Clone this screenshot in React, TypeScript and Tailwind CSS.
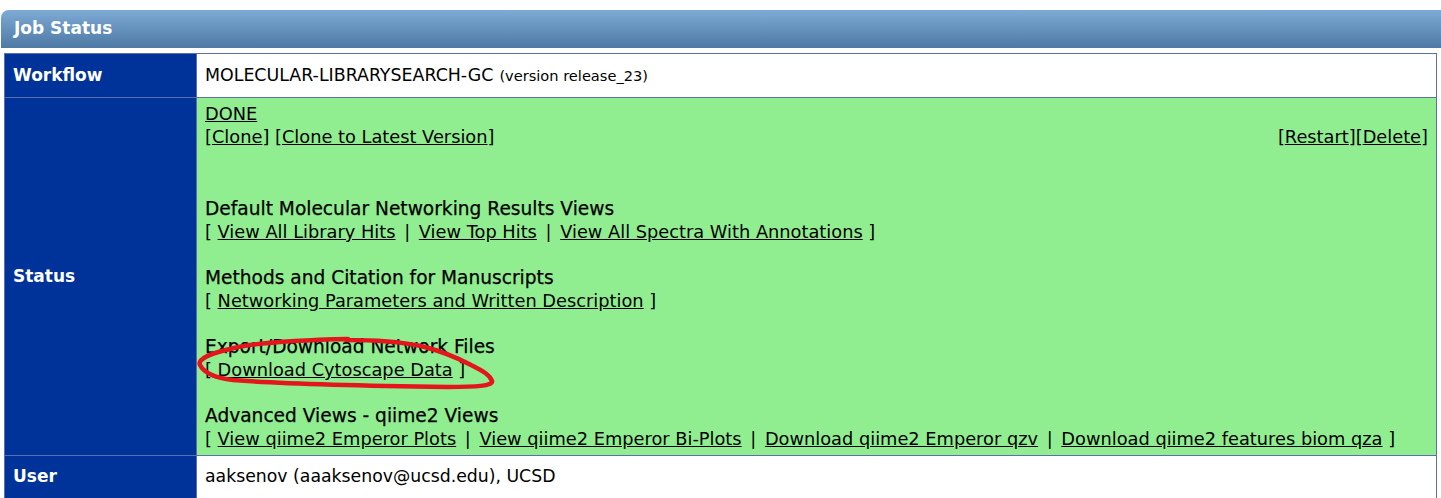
import React from "react";

const font = { fontFamily: '"DejaVu Sans", Verdana, sans-serif' };

function L({ children }: { children: React.ReactNode }) {
  return <a className="underline text-black cursor-pointer">{children}</a>;
}

function Sep() {
  return (
    <span>
      {" "}
      <span className="mx-[3px]">|</span>{" "}
    </span>
  );
}

function H({ children }: { children: React.ReactNode }) {
  return <div className="text-[18.6px] [-webkit-text-stroke:0.25px_black]">{children}</div>;
}

export default function App() {
  return (
    <div className="bg-white w-[1441px] h-[498px] overflow-hidden text-black" style={font}>
      <div className="pt-[10px]">
        <div className="ml-[1px] h-[38px] rounded-tl-[8px] bg-gradient-to-b from-[#7eaad6] to-[#4e79a5] flex items-center pl-[13px]">
          <span className="text-white font-bold text-[17px]">Job Status</span>
        </div>
      </div>
      <div className="mt-[5px] mx-[4px] border border-[#5b6eae] relative">
        <div className="flex border-b border-[#5b6eae] h-[44px]">
          <div className="w-[192px] bg-[#003399] text-white font-bold text-[17px] flex items-center pl-[8px] border-r border-[#5b6eae]">
            Workflow
          </div>
          <div className="flex-1 bg-white flex items-center pl-[8px] text-[17.4px]">
            MOLECULAR-LIBRARYSEARCH-GC<span className="text-[14.6px] ml-[6px]">(version release_23)</span>
          </div>
        </div>
        <div className="flex border-b border-[#5b6eae]">
          <div className="w-[192px] bg-[#003399] text-white font-bold text-[17px] flex items-center pl-[8px] border-r border-[#5b6eae]">
            Status
          </div>
          <div className="flex-1 bg-[#90ee90] px-[8px] pt-[4px] pb-[5px] text-[17.8px] leading-[23px] relative">
            <div><L>DONE</L></div>
            <div className="flex justify-between">
              <span>
                [<L>Clone</L>] [<L>Clone to Latest Version</L>]
              </span>
              <span>
                [<L>Restart</L>][<L>Delete</L>]
              </span>
            </div>
            <div className="h-[48px]" />
            <div className="mt-[1px]" />
            <H>Default Molecular Networking Results Views</H>
            <div>
              [ <L>View All Library Hits</L><Sep /><L>View Top Hits</L><Sep /><L>View All Spectra With Annotations</L> ]
            </div>
            <div className="h-[23px]" />
            <H>Methods and Citation for Manuscripts</H>
            <div>
              [ <L>Networking Parameters and Written Description</L> ]
            </div>
            <div className="h-[23px]" />
            <H>Export/Download Network Files</H>
            <div>
              [ <L>Download Cytoscape Data</L> ]
            </div>
            <div className="h-[23px]" />
            <H>Advanced Views - qiime2 Views</H>
            <div>
              [ <L>View qiime2 Emperor Plots</L><Sep /><L>View qiime2 Emperor Bi-Plots</L><Sep /><L>Download qiime2 Emperor qzv</L><Sep /><L>Download qiime2 features biom qza</L> ]
            </div>
          </div>
        </div>
        <div className="flex border-b border-[#5b6eae] h-[43px]">
          <div className="w-[192px] bg-[#003399] text-white font-bold text-[17px] flex items-center pl-[8px] border-r border-[#5b6eae]">
            User
          </div>
          <div className="flex-1 bg-white flex items-center pl-[8px] text-[17.3px]">
            aaksenov (aaaksenov@ucsd.edu), UCSD
          </div>
        </div>
        <div className="flex h-[30px]">
          <div className="w-[192px] bg-[#003399] border-r border-[#5b6eae]" />
          <div className="flex-1 bg-white" />
        </div>
        <svg
          className="absolute left-0 top-0 pointer-events-none"
          width="1433"
          height="440"
          viewBox="4 53 1433 440"
        >
          <path
            d="M347 338 C 300 339, 255 342, 233 347 C 210 352, 196 358, 199 364 C 203 372, 215 377, 232 379 C 280 383, 380 385, 447 386 C 475 386, 492 385, 491 380 C 489 374, 482 370, 470 364 C 455 356, 440 350, 420 345 C 400 341, 375 339, 345 339"
            fill="none"
            stroke="#e4151b"
            strokeWidth="4.5"
            strokeLinecap="round"
          />
        </svg>
      </div>
    </div>
  );
}
